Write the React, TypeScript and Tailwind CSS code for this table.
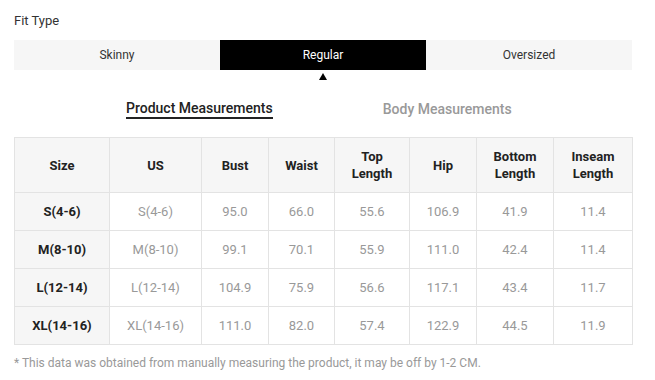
import { useState } from "react";

const fits = ["Skinny", "Regular", "Oversized"];

const columns = [
  { label: ["Size"], width: 95 },
  { label: ["US"], width: 92 },
  { label: ["Bust"], width: 67 },
  { label: ["Waist"], width: 66 },
  { label: ["Top", "Length"], width: 75 },
  { label: ["Hip"], width: 67 },
  { label: ["Bottom", "Length"], width: 77 },
  { label: ["Inseam", "Length"], width: 79 },
];

const rows = [
  ["S(4-6)", "S(4-6)", "95.0", "66.0", "55.6", "106.9", "41.9", "11.4"],
  ["M(8-10)", "M(8-10)", "99.1", "70.1", "55.9", "111.0", "42.4", "11.4"],
  ["L(12-14)", "L(12-14)", "104.9", "75.9", "56.6", "117.1", "43.4", "11.7"],
  ["XL(14-16)", "XL(14-16)", "111.0", "82.0", "57.4", "122.9", "44.5", "11.9"],
];

export default function App() {
  const [fit, setFit] = useState("Regular");
  const [tab, setTab] = useState("product");

  return (
    <div
      className="w-[655px] h-[380px] bg-white pl-[14px] pt-[12px] text-[#222]"
      style={{ fontFamily: "Roboto, 'Liberation Sans', sans-serif" }}
    >
      <div className="w-[618px]">
        <div className="h-[18px] leading-[18px] text-[13px] text-[#333]">Fit Type</div>

        {/* Fit selector */}
        <div className="mt-[10px] flex h-[30px] bg-[#f6f6f6]">
          {fits.map((f) => (
            <button
              key={f}
              onClick={() => setFit(f)}
              className={
                f === fit
                  ? "flex-1 bg-black text-white text-[12px]"
                  : "flex-1 text-[#333] text-[12px]"
              }
            >
              {f}
            </button>
          ))}
        </div>
        <div className="flex h-[10px]">
          {fits.map((f) => (
            <div key={f} className="flex-1 flex justify-center pt-[3px]">
              {f === fit && (
                <div className="w-0 h-0 border-l-[4px] border-r-[4px] border-b-[7px] border-l-transparent border-r-transparent border-b-black" />
              )}
            </div>
          ))}
        </div>

        {/* Measurement tabs */}
        <div className="mt-[19px] flex gap-[110px] pl-[112px]">
          <button
            onClick={() => setTab("product")}
            className={
              tab === "product"
                ? "h-[20px] leading-[18px] text-[14px] font-medium text-[#222] border-b-2 border-[#222]"
                : "h-[20px] leading-[18px] text-[14px] font-medium text-[#999]"
            }
          >
            Product Measurements
          </button>
          <button
            onClick={() => setTab("body")}
            className={
              tab === "body"
                ? "h-[20px] leading-[18px] text-[14px] font-medium text-[#222] border-b-2 border-[#222]"
                : "h-[20px] leading-[18px] text-[14px] font-medium text-[#999]"
            }
          >
            Body Measurements
          </button>
        </div>

        {/* Size table */}
        <table className="mt-[18px] w-[618px] table-fixed border-collapse text-[13px]">
          <colgroup>
            {columns.map((c, i) => (
              <col key={i} style={{ width: c.width }} />
            ))}
          </colgroup>
          <thead>
            <tr className="h-[55px] bg-[#f6f6f6]">
              {columns.map((c, i) => (
                <th
                  key={i}
                  className="border border-[#e3e3e3] font-bold text-[#222] text-center leading-[17px] p-0"
                >
                  {c.label.map((l) => (
                    <div key={l}>{l}</div>
                  ))}
                </th>
              ))}
            </tr>
          </thead>
          <tbody>
            {rows.map((r) => (
              <tr key={r[0]} className="h-[38px]">
                {r.map((v, i) => (
                  <td
                    key={i}
                    className={
                      i === 0
                        ? "border border-[#e3e3e3] bg-[#f6f6f6] font-bold text-[#222] text-center p-0"
                        : "border border-[#e3e3e3] text-[#999] text-center p-0"
                    }
                  >
                    {v}
                  </td>
                ))}
              </tr>
            ))}
          </tbody>
        </table>

        <div className="mt-[10px] h-[16px] leading-[16px] text-[12px] text-[#999]">
          * This data was obtained from manually measuring the product, it may be off by 1-2 CM.
        </div>
      </div>
    </div>
  );
}
